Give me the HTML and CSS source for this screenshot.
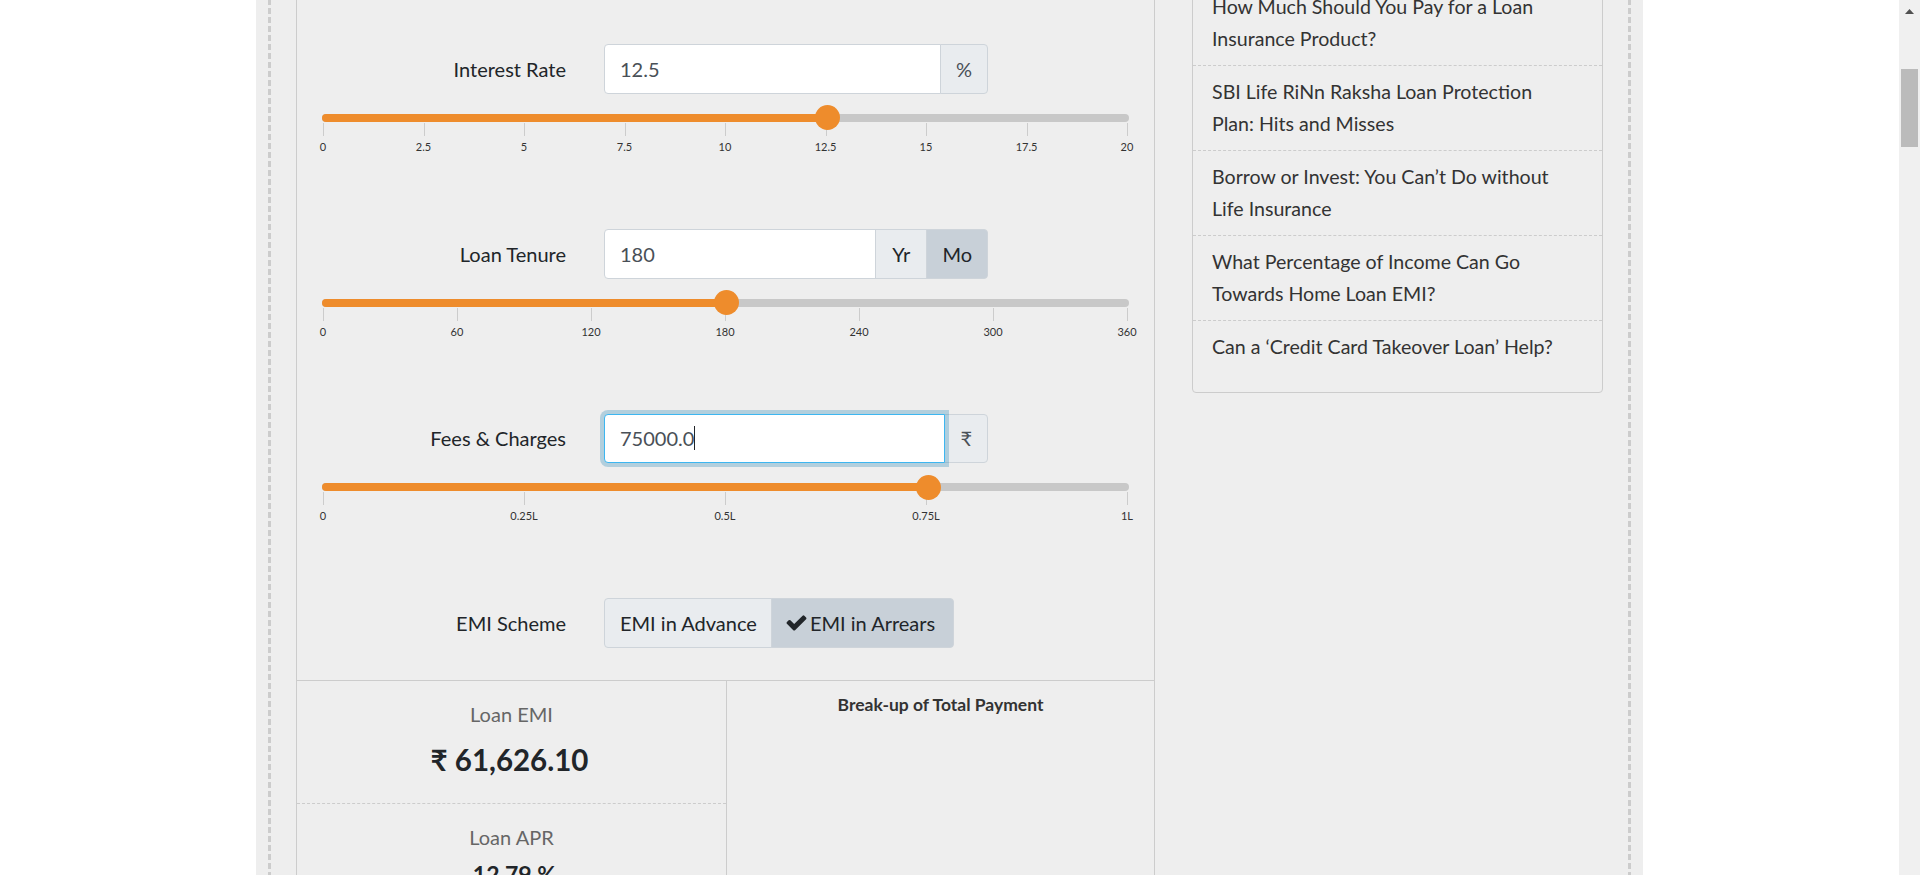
FILE: index.html
```html
<!DOCTYPE html>
<html lang="en">
<head>
    <meta charset="UTF-8">
    <title>EMI Calculator</title>
    <link rel="stylesheet" href="styles.css">
</head>
<body>
    <div class="page">
        <div class="wrap">
            <div class="dashed">
                <main class="calc">
                    <div class="calc-form">
                        <!-- Interest rate -->
                        <div class="calc-row">
                            <div class="field">
                                <label class="field-label">Interest Rate</label>
                                <div class="input-group">
                                    <input class="input" type="text" value="12.5">
                                    <span class="addon addon-pct">%</span>
                                </div>
                            </div>
                            <div class="slider">
                                <div class="track"><div class="fill" style="width: 62.5%"></div><div class="handle" style="left: 62.5%"></div></div>
                                <div class="ticks">
                                    <div class="tick"><span>0</span></div>
                                    <div class="tick"><span>2.5</span></div>
                                    <div class="tick"><span>5</span></div>
                                    <div class="tick"><span>7.5</span></div>
                                    <div class="tick"><span>10</span></div>
                                    <div class="tick"><span>12.5</span></div>
                                    <div class="tick"><span>15</span></div>
                                    <div class="tick"><span>17.5</span></div>
                                    <div class="tick"><span>20</span></div>
                                </div>
                            </div>
                        </div>

                        <!-- Tenure -->
                        <div class="calc-row">
                            <div class="field">
                                <label class="field-label">Loan Tenure</label>
                                <div class="input-group">
                                    <input class="input" type="text" value="180">
                                    <span class="addon addon-yr">Yr</span>
                                    <span class="addon addon-mo active">Mo</span>
                                </div>
                            </div>
                            <div class="slider">
                                <div class="track"><div class="fill" style="width: 50%"></div><div class="handle" style="left: 50%"></div></div>
                                <div class="ticks">
                                    <div class="tick"><span>0</span></div>
                                    <div class="tick"><span>60</span></div>
                                    <div class="tick"><span>120</span></div>
                                    <div class="tick"><span>180</span></div>
                                    <div class="tick"><span>240</span></div>
                                    <div class="tick"><span>300</span></div>
                                    <div class="tick"><span>360</span></div>
                                </div>
                            </div>
                        </div>

                        <!-- Fees -->
                        <div class="calc-row">
                            <div class="field">
                                <label class="field-label">Fees &amp; Charges</label>
                                <div class="input-group">
                                    <div class="input focused">75000.0<span class="caret"></span></div>
                                    <span class="addon addon-rs">₹</span>
                                </div>
                            </div>
                            <div class="slider">
                                <div class="track"><div class="fill" style="width: 75%"></div><div class="handle" style="left: 75%"></div></div>
                                <div class="ticks">
                                    <div class="tick"><span>0</span></div>
                                    <div class="tick"><span>0.25L</span></div>
                                    <div class="tick"><span>0.5L</span></div>
                                    <div class="tick"><span>0.75L</span></div>
                                    <div class="tick"><span>1L</span></div>
                                </div>
                            </div>
                        </div>

                        <!-- Scheme -->
                        <div class="field scheme">
                            <label class="field-label">EMI Scheme</label>
                            <div class="input-group">
                                <span class="addon addon-adv">EMI in Advance</span>
                                <span class="addon addon-arr active">
                                    <svg class="check" viewBox="0 0 1792 1792"><path d="M1671 566q0 40-28 68l-724 724-136 136q-28 28-68 28t-68-28l-136-136-362-362q-28-28-28-68t28-68l136-136q28-28 68-28t68 28l294 295 656-657q28-28 68-28t68 28l136 136q28 28 28 68z"/></svg>EMI in Arrears
                                </span>
                            </div>
                        </div>
                    </div>

                    <div class="results">
                        <div class="figures">
                            <div class="figure">
                                <h4>Loan EMI</h4>
                                <p>₹ 61,626.10</p>
                            </div>
                            <div class="figure figure-small">
                                <h4>Loan APR</h4>
                                <p>12.79 %</p>
                            </div>
                        </div>
                        <div class="breakup">
                            <h5>Break-up of Total Payment</h5>
                        </div>
                    </div>
                </main>

                <aside class="sidebar">
                    <ul class="links">
                        <li>How Much Should You Pay for a Loan Insurance Product?</li>
                        <li>SBI Life RiNn Raksha Loan Protection Plan: Hits and Misses</li>
                        <li>Borrow or Invest: You Can’t Do without Life Insurance</li>
                        <li>What Percentage of Income Can Go Towards Home Loan EMI?</li>
                        <li>Can a ‘Credit Card Takeover Loan’ Help?</li>
                    </ul>
                </aside>
            </div>
        </div>

        <div class="scrollbar">
            <svg class="arrow" viewBox="0 0 21 18"><path d="M10.5 9 L15 14 L6 14 Z"/></svg>
            <div class="thumb"></div>
        </div>
    </div>
</body>
</html>
```

FILE: styles.css
```css
* {
    box-sizing: border-box;
}

body {
    margin: 0;
    background: #fff;
    font-family: 'Lato', sans-serif;
    font-size: 20px;
    color: #212529;
}

.page {
    display: flex;
    height: 875px;
    overflow: hidden;
}

.wrap {
    flex: 1;
    padding-left: 256px;
}

.dashed {
    width: 1387px;
    height: 1000px;
    margin-top: -100px;
    padding: 0 12px;
    display: flex;
    background-color: #eee;
    background-image:
        repeating-linear-gradient(to bottom, #ccc 0 6px, transparent 6px 9px),
        repeating-linear-gradient(to bottom, #ccc 0 6px, transparent 6px 9px);
    background-size: 3px 100%, 3px 100%;
    background-position: 12px 0, 1372px 0;
    background-repeat: no-repeat;
}

/* Left column */
.calc {
    width: 859px;
    margin-left: 28px;
    border-left: 1px solid #ccc;
    border-right: 1px solid #ccc;
}

.calc-form {
    padding: 144.4px 0 32px;
}

.calc-row {
    height: 184.6px;
}

.field {
    display: flex;
    height: 49.6px;
    align-items: center;
}

.field-label {
    width: 269px;
    text-align: right;
    margin-right: 38px;
}

.input-group {
    display: flex;
    height: 100%;
    width: 384px;
}

.scheme .input-group {
    width: auto;
}

.input {
    flex: 1;
    min-width: 0;
    height: 100%;
    padding: 0 15px;
    background: #fff;
    border: 1px solid #ced4da;
    border-radius: 4px 0 0 4px;
    font: inherit;
    color: #495057;
    display: flex;
    align-items: center;
}

.input.focused {
    position: relative;
    z-index: 1;
    border-color: #3db6f0;
    box-shadow: 0 0 0 4px rgba(0, 115, 170, 0.25);
}

.caret {
    width: 1px;
    height: 24px;
    background: #212529;
}

.addon {
    display: flex;
    align-items: center;
    justify-content: center;
    padding: 0 15px;
    background: #e9ecef;
    border: 1px solid #ced4da;
    margin-left: -1px;
    color: #495057;
}

.addon:last-child {
    border-radius: 0 4px 4px 0;
}

.addon.active {
    background: #c8d0d8;
    color: #212529;
}

.addon-yr,
.addon-mo,
.addon-adv {
    color: #212529;
}

.addon-yr {
    padding: 0 16px;
}

.addon-adv {
    margin-left: 0;
    padding-right: 14px;
    border-radius: 4px 0 0 4px;
}

.addon-arr {
    padding: 0 18px 0 13px;
}

.check {
    width: 23px;
    height: 23px;
    margin-right: 2px;
    fill: #212529;
}

/* Sliders */
.slider {
    margin: 20px 25px 0;
}

.track {
    position: relative;
    height: 8px;
    background: #c8c8c8;
    border-radius: 4px;
}

.fill {
    height: 100%;
    background: #ee8c2c;
    border-radius: 4px 0 0 4px;
}

.handle {
    position: absolute;
    z-index: 1;
    top: -8.5px;
    width: 25px;
    height: 25px;
    margin-left: -11.5px;
    background: #ee8c2c;
    border-radius: 50%;
}

.ticks {
    display: flex;
    justify-content: space-between;
    margin: 1px 1px 0;
}

.tick {
    width: 1px;
    height: 13px;
    background: #ccc;
    position: relative;
}

.tick span {
    position: absolute;
    top: 17px;
    left: 0;
    transform: translateX(-50%);
    font-size: 11px;
    line-height: 13px;
    color: #333;
}

/* Results */
.results {
    display: grid;
    grid-template-columns: 430px 1fr;
    border-top: 1px solid #ccc;
}

.figures {
    border-right: 1px solid #ccc;
}

.figure {
    height: 123px;
    padding-top: 19px;
    text-align: center;
    border-bottom: 1px dashed #ccc;
}

.figure h4 {
    margin: 0;
    font-size: 20px;
    font-weight: 400;
    line-height: 28px;
    color: #666;
}

.figure p {
    margin: 14px 4px 0 0;
    font-size: 29.5px;
    font-weight: 700;
    line-height: 36px;
}

.figure-small p {
    margin: 9px 0 0 6px;
    font-size: 23px;
    line-height: 28px;
}

.breakup h5 {
    margin: 13px 0 0;
    text-align: center;
    font-size: 17.5px;
    font-weight: 700;
    line-height: 22px;
    color: #333;
}

/* Sidebar */
.sidebar {
    width: 411px;
    margin-left: 37px;
}

.links {
    list-style: none;
    margin: 0;
    padding: 80px 0 19px;
    background: #eee;
    border: 1px solid #ccc;
    border-radius: 4px;
}

.links li {
    padding: 10px 35px 10px 19px;
    line-height: 32px;
    color: #333;
    font-size: 19.6px;
    border-bottom: 1px dashed #ccc;
}

.links li:last-child {
    border-bottom: 0;
}

/* Scrollbar */
.scrollbar {
    width: 21px;
    flex: none;
    background: #f0f0f0;
}

.arrow {
    display: block;
    width: 21px;
    height: 18px;
    fill: #505050;
}

.thumb {
    width: 17px;
    height: 78px;
    margin: 51px 0 0 2px;
    background: #bbb;
}
```
